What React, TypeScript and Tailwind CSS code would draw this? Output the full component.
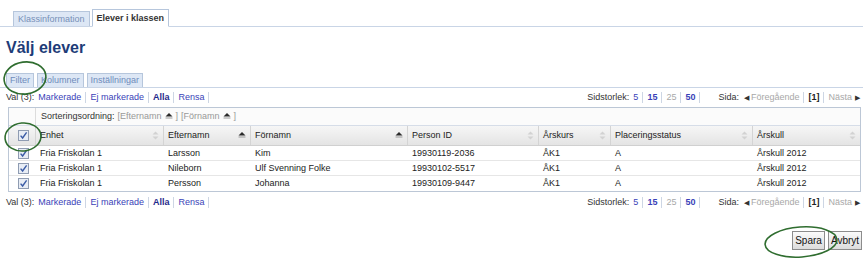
import React from "react";

const SortBoth = () => (
  <svg width="7" height="9" viewBox="0 0 7 9" className="shrink-0">
    <path d="M3.5 0.5 L6.5 3.5 H0.5Z" fill="#d2d2d2" />
    <path d="M3.5 8.5 L6.5 5.5 H0.5Z" fill="#d2d2d2" />
  </svg>
);

const SortUp = () => (
  <svg width="8" height="9" viewBox="0 0 8 9" className="shrink-0">
    <path d="M4 1 L7.5 4.5 H0.5Z" fill="#2b2b2b" />
    <path d="M0.5 6 H7.5" stroke="#9a9a9a" strokeWidth="1" />
  </svg>
);

const Check = () => (
  <span className="inline-flex h-[11px] w-[11px] items-center justify-center border border-[#8f9cb2] bg-[#e8edf5]">
    <svg width="9" height="9" viewBox="0 0 9 9">
      <path d="M1.6 4.6 L3.6 7 L7.6 1.4" stroke="#3b5ca6" strokeWidth="1.4" fill="none" />
    </svg>
  </span>
);

const Sep = () => <span className="mx-[4px] inline-block h-[11px] w-px bg-[#cdd6e4] align-middle" />;

const ValRow = () => (
  <div className="flex h-[13px] items-center justify-between pl-[6px] pr-[3px]">
    <div className="flex items-center whitespace-nowrap">
      <span className="text-[#333]">Val (3):</span>
      <span className="ml-[4px] text-[#3a3fb8]">Markerade</span>
      <Sep />
      <span className="text-[#3a3fb8]">Ej markerade</span>
      <Sep />
      <span className="font-bold text-[#1f2b8c]">Alla</span>
      <Sep />
      <span className="text-[#3a3fb8]">Rensa</span>
      <Sep />
    </div>
    <div className="flex items-center whitespace-nowrap">
      <span className="text-[#333]">Sidstorlek:</span>
      <span className="ml-[4px] text-[#3a3fb8]">5</span>
      <Sep />
      <span className="font-bold text-[#3a3fb8]">15</span>
      <Sep />
      <span className="text-[#a8a8a8]">25</span>
      <Sep />
      <span className="font-bold text-[#3a3fb8]">50</span>
      <Sep />
      <span className="ml-[14px] text-[#333]">Sida:</span>
      <span className="ml-[5px] text-[7px] text-[#333]">◀</span>
      <span className="ml-[2px] text-[#a8a8a8]">Föregående</span>
      <Sep />
      <span className="font-bold text-[#222]">[1]</span>
      <Sep />
      <span className="text-[#a8a8a8]">Nästa</span>
      <span className="ml-[3px] text-[7px] text-[#333]">▶</span>
    </div>
  </div>
);

const Tab = ({ label, active }: { label: string; active?: boolean }) =>
  active ? (
    <div className="-mb-px flex h-[18px] items-center border border-b-white border-[#b6c6dc] bg-white px-[4px] text-[9px] font-bold text-[#333]">
      {label}
    </div>
  ) : (
    <div className="flex h-[15px] items-center border border-b-0 border-[#b6c6dc] bg-[#dde7f5] px-[4px] text-[9px] text-[#7790b8]">
      {label}
    </div>
  );

const SubTab = ({ label }: { label: string }) => (
  <div className="flex h-[14px] items-center border border-b-0 border-[#b6c6dc] bg-[#dde7f5] px-[3px] text-[9px] text-[#6f8cbc]">
    {label}
  </div>
);

const cols = [
  { w: "w-[27px]", label: "", icon: null as React.ReactNode },
  { w: "w-[128px]", label: "Enhet", icon: <SortBoth /> },
  { w: "w-[87px]", label: "Efternamn", icon: <SortUp /> },
  { w: "w-[157px]", label: "Förnamn", icon: <SortUp /> },
  { w: "w-[131px]", label: "Person ID", icon: <SortBoth /> },
  { w: "w-[72px]", label: "Årskurs", icon: <SortBoth /> },
  { w: "w-[142px]", label: "Placeringsstatus", icon: <SortBoth /> },
  { w: "flex-1", label: "Årskull", icon: <SortBoth /> },
];

const rows = [
  ["Fria Friskolan 1", "Larsson", "Kim", "19930119-2036", "ÅK1", "A", "Årskull 2012"],
  ["Fria Friskolan 1", "Nileborn", "Ulf Svenning Folke", "19930102-5517", "ÅK1", "A", "Årskull 2012"],
  ["Fria Friskolan 1", "Persson", "Johanna", "19930109-9447", "ÅK1", "A", "Årskull 2012"],
];

export default function App() {
  return (
    <div
      className="relative h-[258px] w-[863px] overflow-hidden bg-white text-[9px] leading-none text-[#333]"
      style={{ fontFamily: '"Liberation Sans", Arial, sans-serif' }}
    >
      {/* top tabs */}
      <div className="flex h-[27px] items-end gap-[2px] border-b border-[#c9d5e6] pl-[13px]">
        <Tab label="Klassinformation" />
        <Tab label="Elever i klassen" active />
      </div>

      {/* title */}
      <div className="mt-[11px] h-[20px] pl-[6px] text-[16px] font-bold leading-[20px] text-[#1e3c78]">Välj elever</div>

      {/* sub tabs */}
      <div className="mt-[15px] flex h-[15px] items-end gap-[3px] border-b border-[#c9d5e6] pl-[6px]">
        <SubTab label="Filter" />
        <SubTab label="Kolumner" />
        <SubTab label="Inställningar" />
      </div>

      <div className="mt-[3px]">
        <ValRow />
      </div>

      {/* table */}
      <div className="ml-[8px] mt-[3px] w-[853px] border border-[#bcc7d6]">
        <div className="flex h-[18px] border-b border-[#d6dde8] bg-[#fbfbfb]">
          <div className="w-[27px] border-r border-[#dcdcdc]" />
          <div className="flex items-center whitespace-nowrap pl-[5px]">
            <span className="text-[#333]">Sorteringsordning:</span>
            <span className="ml-[3px] inline-flex items-center gap-[3px] text-[#999]">
              <span>[Efternamn</span>
              <SortUp />
              <span>]</span>
            </span>
            <span className="ml-[3px] inline-flex items-center gap-[3px] text-[#999]">
              <span>[Förnamn</span>
              <SortUp />
              <span>]</span>
            </span>
          </div>
        </div>
        <div className="flex h-[20px] border-b border-[#d0d0d0] bg-gradient-to-b from-[#f6f6f6] to-[#e4e4e4]">
          {cols.map((c, i) => (
            <div
              key={i}
              className={`${c.w} flex items-center justify-between border-[#d4d4d4] px-[4px] ${i < cols.length - 1 ? "border-r" : ""}`}
            >
              {i === 0 ? (
                <span className="ml-[5px]">
                  <Check />
                </span>
              ) : (
                <>
                  <span className="text-[#222]">{c.label}</span>
                  {c.icon}
                </>
              )}
            </div>
          ))}
        </div>
        {rows.map((r, ri) => (
          <div key={ri} className={`flex h-[15px] ${ri < rows.length - 1 ? "border-b border-[#e6e6e6]" : ""}`}>
            <div className="flex w-[27px] items-center pl-[9px]">
              <Check />
            </div>
            {r.map((v, ci) => (
              <div key={ci} className={`${cols[ci + 1].w} flex items-center px-[4px] text-[#222]`}>
                {v}
              </div>
            ))}
          </div>
        ))}
      </div>

      <div className="mt-[4px]">
        <ValRow />
      </div>

      {/* buttons */}
      <div className="mt-[22px] flex justify-end gap-[3px] pr-[1px]">
        <button className="h-[19px] w-[33px] border border-[#8c8c8c] bg-gradient-to-b from-[#fbfbfb] to-[#dcdcdc] text-[10px] text-[#111]">
          Spara
        </button>
        <button className="h-[19px] w-[34px] border border-[#8c8c8c] bg-gradient-to-b from-[#fbfbfb] to-[#dcdcdc] text-[10px] text-[#111]">
          Avbryt
        </button>
      </div>

      {/* annotation ellipses */}
      <svg className="pointer-events-none absolute left-0 top-0" width="863" height="258">
        <ellipse cx="25" cy="78" rx="21" ry="16" fill="none" stroke="#2f6d2f" strokeWidth="1.6" transform="rotate(-8 25 78)" />
        <ellipse cx="23" cy="137" rx="18" ry="14" fill="none" stroke="#2f6d2f" strokeWidth="1.6" transform="rotate(-6 23 137)" />
        <ellipse cx="801" cy="242" rx="36" ry="15" fill="none" stroke="#2f6d2f" strokeWidth="1.6" transform="rotate(-4 801 242)" />
      </svg>
    </div>
  );
}
